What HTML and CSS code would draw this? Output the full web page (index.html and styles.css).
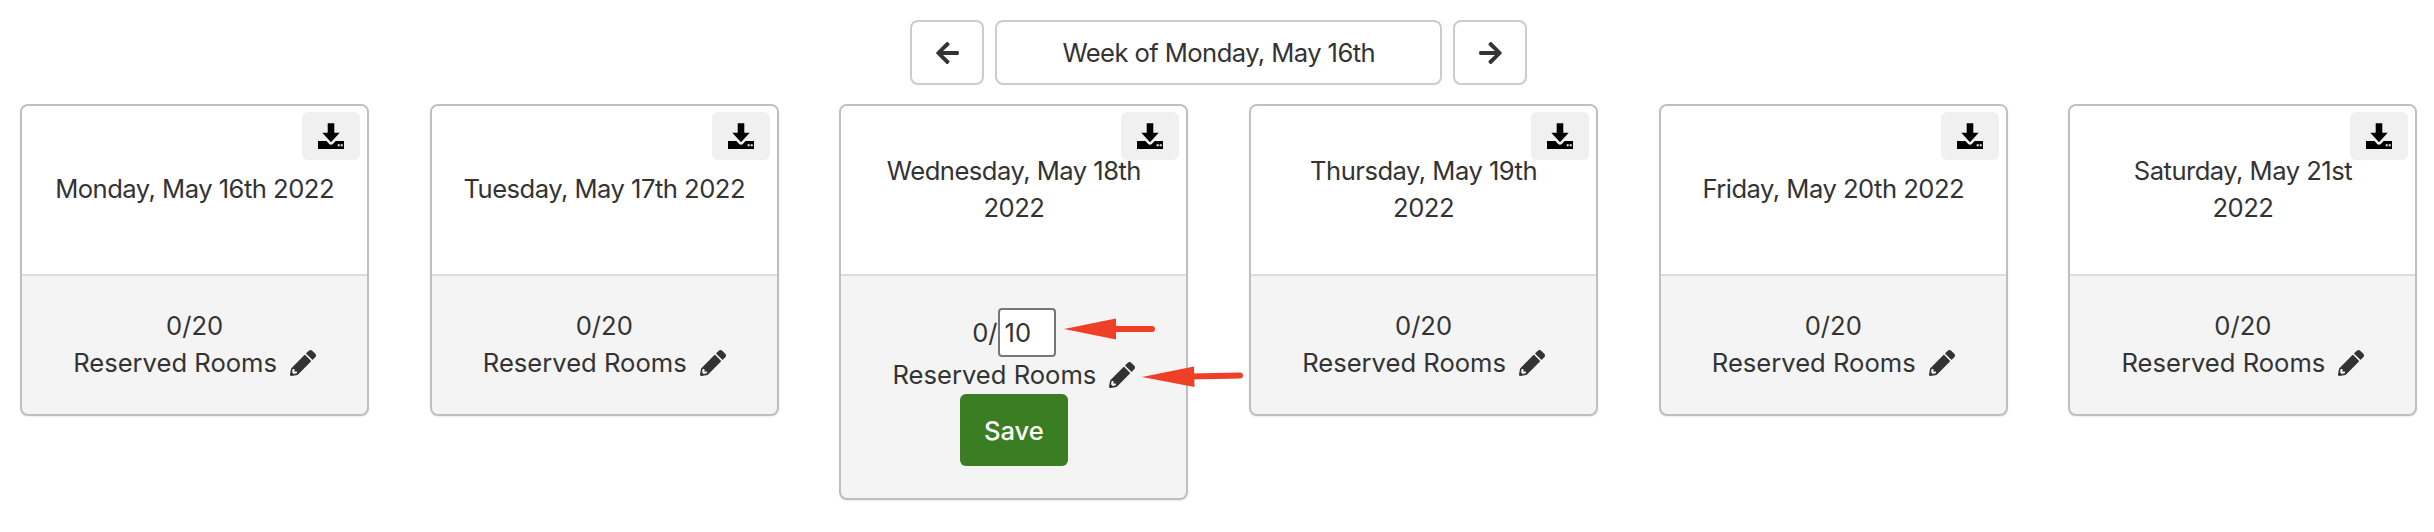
FILE: index.html
```html
<!DOCTYPE html>
<html lang="en">
<head>
<meta charset="utf-8">
<title>Reserved Rooms</title>
<link rel="stylesheet" href="styles.css">
</head>
<body>
<svg width="0" height="0" class="defs" aria-hidden="true">
  <symbol id="i-download" viewBox="0 0 26 26"><path fill-rule="evenodd" d="M9.7 0.3h6.600v9.500h5.400L13 19.300 4.300 9.800h5.400z M0 18h8.400l2.800 2.900c1 1 2.600 1 3.600 0l2.800-2.900H26v8H0z M19.700 21.300h2v2h-2z M22.700 21.300h2v2h-2z"/></symbol>
  <symbol id="i-pencil" viewBox="0 0 512 512"><path d="M497.900 142.100l-46.100 46.100c-4.700 4.700-12.300 4.700-17 0l-111-111c-4.700-4.700-4.700-12.300 0-17l46.100-46.100c18.700-18.700 49.100-18.700 67.900 0l60.100 60.100c18.800 18.700 18.800 49.100 0 67.900zM284.200 99.800L21.600 362.400.4 483.900c-2.900 16.400 11.400 30.600 27.800 27.800l121.500-21.300 262.600-262.600c4.700-4.700 4.700-12.300 0-17l-111-111c-4.800-4.700-12.400-4.700-17.100 0zM88 424h48v36.300l-64.500 11.300-31.100-31.100L51.700 376H88v48z"/></symbol>
</svg>

<nav class="week-nav">
  <button class="nav-btn nav-arrow" type="button" aria-label="Previous week">
    <svg class="arrow-icon" viewBox="0 0 448 512"><path d="M257.500 445.100l-22.200 22.200c-9.400 9.400-24.600 9.400-33.900 0L7 273c-9.400-9.400-9.400-24.600 0-33.900L201.400 44.700c9.400-9.400 24.600-9.400 33.900 0l22.200 22.200c9.500 9.500 9.300 25-.4 34.300L136.600 216H424c13.300 0 24 10.700 24 24v32c0 13.300-10.700 24-24 24H136.600l120.500 114.800c9.800 9.300 10 24.800.4 34.300z"/></svg>
  </button>
  <button class="nav-btn nav-label" type="button">Week of Monday, May 16th</button>
  <button class="nav-btn nav-arrow" type="button" aria-label="Next week">
    <svg class="arrow-icon" viewBox="0 0 448 512"><path d="M190.500 66.900l22.200-22.200c9.400-9.400 24.600-9.400 33.900 0L441 239c9.400 9.400 9.400 24.600 0 33.900L246.600 467.300c-9.400 9.400-24.600 9.400-33.900 0l-22.200-22.200c-9.500-9.500-9.300-25 .4-34.300L311.400 296H24c-13.300 0-24-10.700-24-24v-32c0-13.300 10.700-24 24-24h287.400L190.900 101.200c-9.800-9.300-10-24.800-.4-34.300z"/></svg>
  </button>
</nav>

<main class="days">
  <section class="card">
    <header class="card-head">
      <button class="dl-btn" type="button" aria-label="Download"><svg class="dl-icon"><use href="#i-download"/></svg></button>
      <h2 class="day-title">Monday, May 16th 2022</h2>
    </header>
    <div class="card-foot">
      <div class="count">0/20</div>
      <div class="rooms">Reserved Rooms<svg class="pencil"><use href="#i-pencil"/></svg></div>
    </div>
  </section>
  <section class="card">
    <header class="card-head">
      <button class="dl-btn" type="button" aria-label="Download"><svg class="dl-icon"><use href="#i-download"/></svg></button>
      <h2 class="day-title">Tuesday, May 17th 2022</h2>
    </header>
    <div class="card-foot">
      <div class="count">0/20</div>
      <div class="rooms">Reserved Rooms<svg class="pencil"><use href="#i-pencil"/></svg></div>
    </div>
  </section>
  <section class="card">
    <header class="card-head">
      <button class="dl-btn" type="button" aria-label="Download"><svg class="dl-icon"><use href="#i-download"/></svg></button>
      <h2 class="day-title">Wednesday, May 18th 2022</h2>
    </header>
    <div class="card-foot">
      <div class="count count-edit">0/<input class="count-input" type="text" value="10"></div>
      <div class="rooms">Reserved Rooms<svg class="pencil"><use href="#i-pencil"/></svg></div>
      <button class="save" type="button">Save</button>
    </div>
  </section>
  <section class="card">
    <header class="card-head">
      <button class="dl-btn" type="button" aria-label="Download"><svg class="dl-icon"><use href="#i-download"/></svg></button>
      <h2 class="day-title">Thursday, May 19th 2022</h2>
    </header>
    <div class="card-foot">
      <div class="count">0/20</div>
      <div class="rooms">Reserved Rooms<svg class="pencil"><use href="#i-pencil"/></svg></div>
    </div>
  </section>
  <section class="card">
    <header class="card-head">
      <button class="dl-btn" type="button" aria-label="Download"><svg class="dl-icon"><use href="#i-download"/></svg></button>
      <h2 class="day-title">Friday, May 20th 2022</h2>
    </header>
    <div class="card-foot">
      <div class="count">0/20</div>
      <div class="rooms">Reserved Rooms<svg class="pencil"><use href="#i-pencil"/></svg></div>
    </div>
  </section>
  <section class="card">
    <header class="card-head">
      <button class="dl-btn" type="button" aria-label="Download"><svg class="dl-icon"><use href="#i-download"/></svg></button>
      <h2 class="day-title">Saturday, May 21st 2022</h2>
    </header>
    <div class="card-foot">
      <div class="count">0/20</div>
      <div class="rooms">Reserved Rooms<svg class="pencil"><use href="#i-pencil"/></svg></div>
    </div>
  </section>
</main>

<svg class="annotations" viewBox="0 0 2434 532" aria-hidden="true">
  <path class="ann-fill" d="M1064 329 L1116 318.500 L1116 339.500 Z"/>
  <line class="ann-line" x1="1112" y1="329" x2="1152" y2="329"/>
  <path class="ann-fill" d="M1142 377 L1194 366.500 L1194.500 387 Z"/>
  <line class="ann-line" x1="1190" y1="376.500" x2="1240" y2="375.500"/>
</svg>
</body>
</html>
```
FILE: styles.css
```css
* { box-sizing: border-box; }

html, body { margin: 0; background: #fff; }

body {
  position: relative;
  width: 2434px;
  height: 532px;
  overflow: hidden;
  padding: 20px 16.500px 0 20px;
  font-family: Inter, "Liberation Sans", sans-serif;
  font-size: 25.600px;
  line-height: 37px;
  color: #333;
}

.defs { position: absolute; }

button { font: inherit; color: inherit; cursor: pointer; }

.week-nav {
  display: flex;
  justify-content: center;
  gap: 11px;
  height: 65px;
  margin-bottom: 19px;
}

.nav-btn {
  height: 65px;
  background: #fff;
  border: 2px solid #ccc;
  border-radius: 8px;
  padding: 0;
  display: flex;
  align-items: center;
  justify-content: center;
}

.nav-arrow { width: 74px; }
.nav-label { width: 447px; letter-spacing: -0.580px; }

.arrow-icon { width: 23px; height: 26px; fill: #333; }

.days {
  display: grid;
  grid-template-columns: repeat(6, 1fr);
  column-gap: 60.500px;
  align-items: start;
}

.card {
  border: 2px solid #bfbfbf;
  border-radius: 8px;
  overflow: hidden;
  background: #f4f4f4;
  box-shadow: 0 1px 2px rgba(0, 0, 0, 0.08);
}

.card-head {
  position: relative;
  height: 170px;
  display: flex;
  align-items: center;
  justify-content: center;
  padding: 0 30px;
  background: #fff;
  border-bottom: 2px solid #ddd;
  text-align: center;
}

.day-title {
  margin: 0;
  padding-bottom: 3px;
  font: inherit;
  letter-spacing: -0.520px;
}

.dl-btn {
  position: absolute;
  top: 6px;
  right: 7px;
  width: 58px;
  height: 48px;
  padding: 0;
  border: 0;
  border-radius: 6px;
  background: #f0f0f0;
  display: flex;
  align-items: center;
  justify-content: center;
}

.dl-icon { width: 26px; height: 26px; fill: #000; }

.card-foot {
  display: flex;
  flex-direction: column;
  align-items: center;
  padding: 32px 0;
}

.count,
.rooms {
  line-height: 35px;
  padding-bottom: 2px;
}

.count-edit {
  display: flex;
  align-items: center;
  height: 49px;
  padding-bottom: 0;
  line-height: 37px;
}

.count-input {
  width: 58px;
  height: 49px;
  margin: 0;
  padding: 0 5px;
  font: inherit;
  color: inherit;
  background: #fff;
  border: 2px solid #767676;
  border-radius: 4px;
}

.rooms { display: flex; align-items: center; }

.pencil { width: 26px; height: 26px; margin-left: 13px; fill: #333; }

.save {
  width: 108px;
  height: 72px;
  padding: 0;
  border: 0;
  border-radius: 6px;
  background: #3a7d23;
  color: #fff;
  font-weight: 500;
}

.annotations {
  position: absolute;
  left: 0;
  top: 0;
  width: 2434px;
  height: 532px;
  pointer-events: none;
}

.ann-fill { fill: #ee4026; }
.ann-line { stroke: #ee4026; stroke-width: 6; stroke-linecap: round; }
```
